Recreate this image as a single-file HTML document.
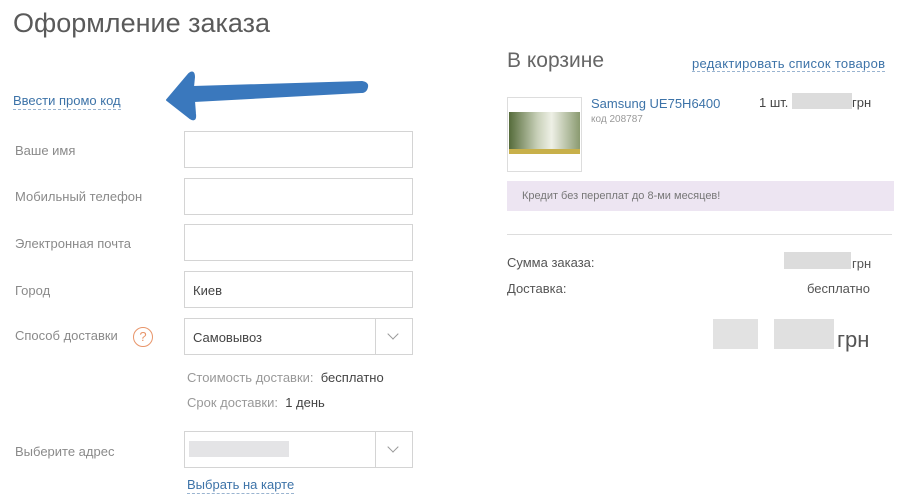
<!DOCTYPE html>
<html><head><meta charset="utf-8"><style>
*{margin:0;padding:0;box-sizing:border-box}
body{width:900px;height:504px;background:#fff;font-family:"Liberation Sans","Noto Sans CJK SC",sans-serif;position:relative;overflow:hidden;color:#444}
.a{position:absolute;white-space:nowrap}
.lbl{font-size:13px;color:#8a8a8a}
.inp{position:absolute;left:184px;width:229px;height:37px;border:1px solid #d4d4d4;background:#fff;font-size:13px;color:#444;padding:11px 0 0 8px}
.sel .dd{position:absolute;right:0;top:0;width:37px;height:35px;border-left:1px solid #d4d4d4}
.sel .dd:after{content:"";position:absolute;left:13px;top:11px;width:7px;height:7px;border-right:1px solid #999;border-bottom:1px solid #999;transform:rotate(45deg)}
.link{color:#3d73a8;border-bottom:1px dashed #9ab4d0}
.blur{position:absolute;background:#dcdcdc}
</style></head><body>
<div class="a" style="left:13px;top:8px;font-size:27px;color:#5a5a5a">Оформление заказа</div>
<div class="a link" style="left:13px;top:93px;font-size:13px;line-height:16px">Ввести промо код</div>
<svg class="a" style="left:160px;top:68px" width="215" height="58"><path d="M7 32 L29 6 Q34 2 34 9 L33 19 L202 14 Q208 15 207 19 Q206 24 201 24 L34 33 L35 46 Q36 54 30 50 Z" fill="#3a78bd" stroke="#3a78bd" stroke-width="2" stroke-linejoin="round"/></svg>
<div class="a lbl" style="left:15px;top:143px">Ваше имя</div><div class="inp" style="top:131px"></div>
<div class="a lbl" style="left:15px;top:189px">Мобильный телефон</div><div class="inp" style="top:178px"></div>
<div class="a lbl" style="left:15px;top:236px">Электронная почта</div><div class="inp" style="top:224px"></div>
<div class="a lbl" style="left:15px;top:283px">Город</div><div class="inp" style="top:271px">Киев</div>
<div class="a lbl" style="left:15px;top:328px">Способ доставки</div>
<div class="a" style="left:133px;top:327px;width:20px;height:20px;border:1.5px solid #e8956a;border-radius:50%;color:#e8956a;font-size:13px;text-align:center;line-height:17px">?</div>
<div class="inp sel" style="top:318px">Самовывоз<div class="dd"></div></div>
<div class="a" style="left:187px;top:370px;font-size:13px;color:#999">Стоимость доставки:&nbsp; <span style="color:#444">бесплатно</span></div>
<div class="a" style="left:187px;top:395px;font-size:13px;color:#999">Срок доставки:&nbsp; <span style="color:#444">1 день</span></div>
<div class="a lbl" style="left:15px;top:444px">Выберите адрес</div>
<div class="inp sel" style="top:431px"><div class="blur" style="left:4px;top:9px;width:100px;height:16px;background:#e4e4e6"></div><div class="dd"></div></div>
<div class="a link" style="left:187px;top:477px;font-size:13px;line-height:16px">Выбрать на карте</div>

<div class="a" style="left:507px;top:49px;font-size:21px;color:#666">В корзине</div>
<div class="a link" style="left:692px;top:56px;font-size:13px;line-height:15px;letter-spacing:0.3px">редактировать список товаров</div>
<div class="a" style="left:507px;top:97px;width:75px;height:75px;border:1px solid #ddd;background:#fff">
<div style="position:absolute;left:1px;top:14px;width:71px;height:42px;background:linear-gradient(90deg,#556b3a,#c8d0b8 40%,#eef0e6 60%,#8a9a70)"></div>
<div style="position:absolute;left:1px;top:51px;width:71px;height:5px;background:#c8b04a"></div></div>
<div class="a" style="left:591px;top:96px;font-size:13px;color:#3d73a8">Samsung UE75H6400</div>
<div class="a" style="left:591px;top:114px;font-size:10px;color:#999">код 208787</div>
<div class="a" style="left:759px;top:95px;font-size:13px;color:#444">1 шт.</div>
<div class="blur" style="left:792px;top:93px;width:60px;height:16px"></div>
<div class="a" style="left:852px;top:95px;font-size:13px;color:#444">грн</div>
<div class="a" style="left:507px;top:181px;width:387px;height:30px;background:#ede5f2;font-size:11px;color:#777;padding:9px 0 0 15px">Кредит без переплат до 8-ми месяцев!</div>
<div class="a" style="left:507px;top:234px;width:385px;height:1px;background:#ddd"></div>
<div class="a" style="left:507px;top:255px;font-size:13px;color:#555">Сумма заказа:</div>
<div class="blur" style="left:784px;top:252px;width:67px;height:17px"></div>
<div class="a" style="left:852px;top:256px;font-size:13px;color:#555">грн</div>
<div class="a" style="left:507px;top:281px;font-size:13px;color:#555">Доставка:</div>
<div class="a" style="left:807px;top:281px;font-size:13px;color:#555">бесплатно</div>
<div class="blur" style="left:713px;top:319px;width:45px;height:30px;background:#e2e2e2"></div>
<div class="blur" style="left:774px;top:319px;width:60px;height:30px;background:#e0e0e0"></div>
<div class="a" style="left:837px;top:327px;font-size:22px;color:#555">грн</div>
</body></html>
